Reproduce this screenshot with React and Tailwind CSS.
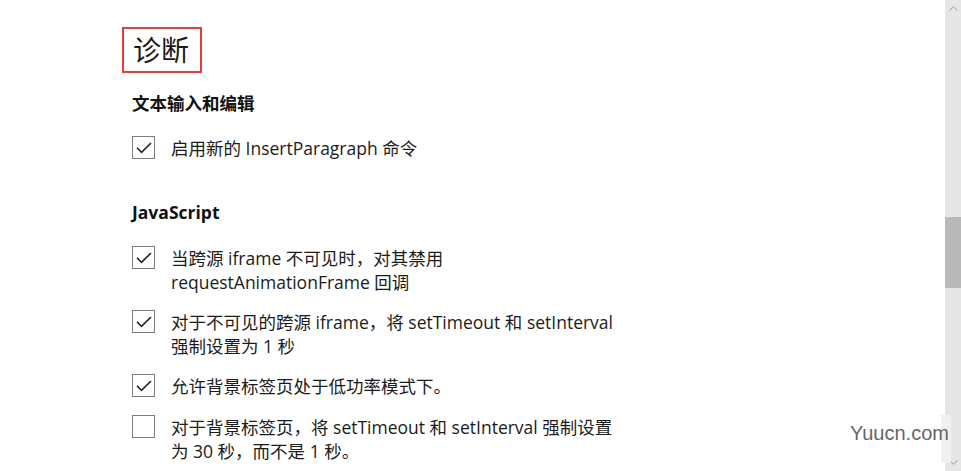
import React from "react";

const font = { fontFamily: '"Open Sans", "Noto Sans CJK SC", sans-serif' };

function Box({ checked }) {
  return (
    <div className="w-[23px] h-[23px] shrink-0 border border-[#7d7d7d] bg-white flex items-center justify-center">
      {checked && (
        <svg width="16" height="12" viewBox="0 0 16 12" fill="none">
          <path d="M1 5.8 L5.5 10.3 L15 1" stroke="#222222" strokeWidth="1.6" />
        </svg>
      )}
    </div>
  );
}

function Item({ checked, lines, className = "" }) {
  return (
    <div className={"flex items-start gap-[16px] " + className}>
      <Box checked={checked} />
      <div className="text-[17.5px] leading-[24px] text-[#1b1b1b]">
        {lines.map((l, i) => (
          <div key={i}>{l}</div>
        ))}
      </div>
    </div>
  );
}

export default function App() {
  return (
    <div className="relative w-[961px] h-[471px] flex bg-white overflow-hidden" style={font}>
      <div className="flex-1 overflow-hidden pl-[122px] pt-[27px]">
        <div className="inline-block border-2 border-[#ea3b3b] pl-[9px] pr-[11px]">
          <div className="text-[28px] leading-[42px] text-[#1b1b1b]">诊断</div>
        </div>
        <div className="pl-[10px]">
          <div className="mt-[18px] text-[17.5px] leading-[24px] font-bold text-[#111]">文本输入和编辑</div>
          <Item className="mt-[21px]" checked lines={["启用新的 InsertParagraph 命令"]} />
          <div className="mt-[40px] text-[17.5px] leading-[24px] font-bold text-[#111]">JavaScript</div>
          <Item className="mt-[22px]" checked lines={["当跨源 iframe 不可见时，对其禁用", "requestAnimationFrame 回调"]} />
          <Item className="mt-[16px]" checked lines={["对于不可见的跨源 iframe，将 setTimeout 和 setInterval", "强制设置为 1 秒"]} />
          <Item className="mt-[16px]" checked lines={["允许背景标签页处于低功率模式下。"]} />
          <Item className="mt-[17px]" checked={false} lines={["对于背景标签页，将 setTimeout 和 setInterval 强制设置", "为 30 秒，而不是 1 秒。"]} />
        </div>
      </div>
      <div className="w-[16px] h-full bg-[#e6e6e6] flex flex-col items-center">
        <div className="h-[16px] flex items-center justify-center">
          <svg width="9" height="5" viewBox="0 0 9 5" fill="none">
            <path d="M0.5 4.5 L4.5 0.8 L8.5 4.5" stroke="#9a9a9a" strokeWidth="1" />
          </svg>
        </div>
        <div className="h-[201px]" />
        <div className="w-full h-[71px] bg-[#b9b9b9]" />
        <div className="flex-1" />
        <div className="h-[18px] flex items-center justify-center">
          <svg width="9" height="5" viewBox="0 0 9 5" fill="none">
            <path d="M0.5 0.5 L4.5 4.2 L8.5 0.5" stroke="#9a9a9a" strokeWidth="1" />
          </svg>
        </div>
      </div>
      <div className="absolute left-[941px] top-[415px] w-[10px] h-[48px] bg-[#f0f0f0]" />
      <div
        className="absolute left-[850px] top-[420px] text-[20px] leading-[26px] text-[#666666] whitespace-nowrap"
        style={{ fontFamily: '"Liberation Sans", Arial, sans-serif' }}
      >
        Yuucn.com
      </div>
    </div>
  );
}
